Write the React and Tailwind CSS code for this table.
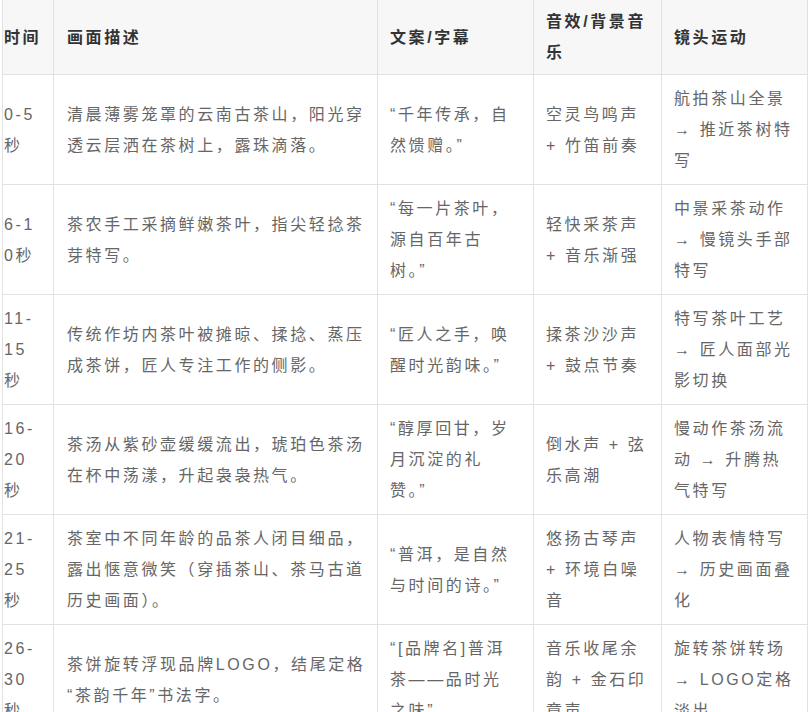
import React from "react";

// storyboard rows
const rows = [
  {
    time: "0-5秒",
    desc: "清晨薄雾笼罩的云南古茶山，阳光穿透云层洒在茶树上，露珠滴落。",
    copy: "“千年传承，自然馈赠。”",
    sound: "空灵鸟鸣声 + 竹笛前奏",
    camera: "航拍茶山全景 → 推近茶树特写",
  },
  {
    time: "6-10秒",
    desc: "茶农手工采摘鲜嫩茶叶，指尖轻捻茶芽特写。",
    copy: "“每一片茶叶，源自百年古树。”",
    sound: "轻快采茶声 + 音乐渐强",
    camera: "中景采茶动作 → 慢镜头手部特写",
  },
  {
    time: "11-15秒",
    desc: "传统作坊内茶叶被摊晾、揉捻、蒸压成茶饼，匠人专注工作的侧影。",
    copy: "“匠人之手，唤醒时光韵味。”",
    sound: "揉茶沙沙声 + 鼓点节奏",
    camera: "特写茶叶工艺 → 匠人面部光影切换",
  },
  {
    time: "16-20秒",
    desc: "茶汤从紫砂壶缓缓流出，琥珀色茶汤在杯中荡漾，升起袅袅热气。",
    copy: "“醇厚回甘，岁月沉淀的礼赞。”",
    sound: "倒水声 + 弦乐高潮",
    camera: "慢动作茶汤流动 → 升腾热气特写",
  },
  {
    time: "21-25秒",
    desc: "茶室中不同年龄的品茶人闭目细品，露出惬意微笑（穿插茶山、茶马古道历史画面）。",
    copy: "“普洱，是自然与时间的诗。”",
    sound: "悠扬古琴声 + 环境白噪音",
    camera: "人物表情特写 → 历史画面叠化",
  },
  {
    time: "26-30秒",
    // zero-width space lets the line break before the opening quote
    desc: "茶饼旋转浮现品牌LOGO，结尾定格\u200B“茶韵千年”书法字。",
    copy: "“[品牌名]普洱茶——品时光之味”",
    sound: "音乐收尾余韵 + 金石印章声",
    camera: "旋转茶饼转场 → LOGO定格淡出",
  },
];

const App = () => {
  return (
    <div className="w-[809px] h-[712px] overflow-hidden bg-white [font-family:'Liberation_Sans','Noto_Sans_CJK_SC',sans-serif] text-[16px] leading-[31px] tracking-[2.6px]">
      <table className="ml-[2px] w-[805px] table-fixed border-collapse">
        <colgroup>
          <col className="w-[51px]" />
          <col className="w-[324px]" />
          <col className="w-[156px]" />
          <col className="w-[128px]" />
          <col className="w-[146px]" />
        </colgroup>

        <thead>
          <tr className="bg-[#f7f7f7] text-[#333] font-bold text-left">
            <th className="border-x border-b border-[#e2e2e2] py-1.5 pl-px pr-[11px] font-bold">时间</th>
            <th className="border-x border-b border-[#e2e2e2] py-1.5 pl-[13px] pr-[5px] font-bold">画面描述</th>
            <th className="border-x border-b border-[#e2e2e2] py-1.5 pl-[12px] pr-[14px] font-bold">文案/字幕</th>
            <th className="border-x border-b border-[#e2e2e2] py-1.5 pl-[12px] pr-[10px] font-bold">音效/背景音乐</th>
            <th className="border-x border-b border-[#e2e2e2] py-1.5 pl-[12px] pr-[12px] font-bold">镜头运动</th>
          </tr>
        </thead>

        <tbody className="text-[#666]">
          {rows.map((row) => (
            <tr key={row.time}>
              <td className="border-x border-b border-[#e2e2e2] py-2 pl-px pr-[11px] break-all">{row.time}</td>
              <td className="border-x border-b border-[#e2e2e2] py-2 pl-[13px] pr-[5px]">{row.desc}</td>
              <td className="border-x border-b border-[#e2e2e2] py-2 pl-[12px] pr-[14px]">{row.copy}</td>
              <td className="border-x border-b border-[#e2e2e2] py-2 pl-[12px] pr-[10px]">{row.sound}</td>
              <td className="border-x border-b border-[#e2e2e2] py-2 pl-[12px] pr-[12px]">{row.camera}</td>
            </tr>
          ))}
        </tbody>
      </table>
    </div>
  );
};

export default App;
